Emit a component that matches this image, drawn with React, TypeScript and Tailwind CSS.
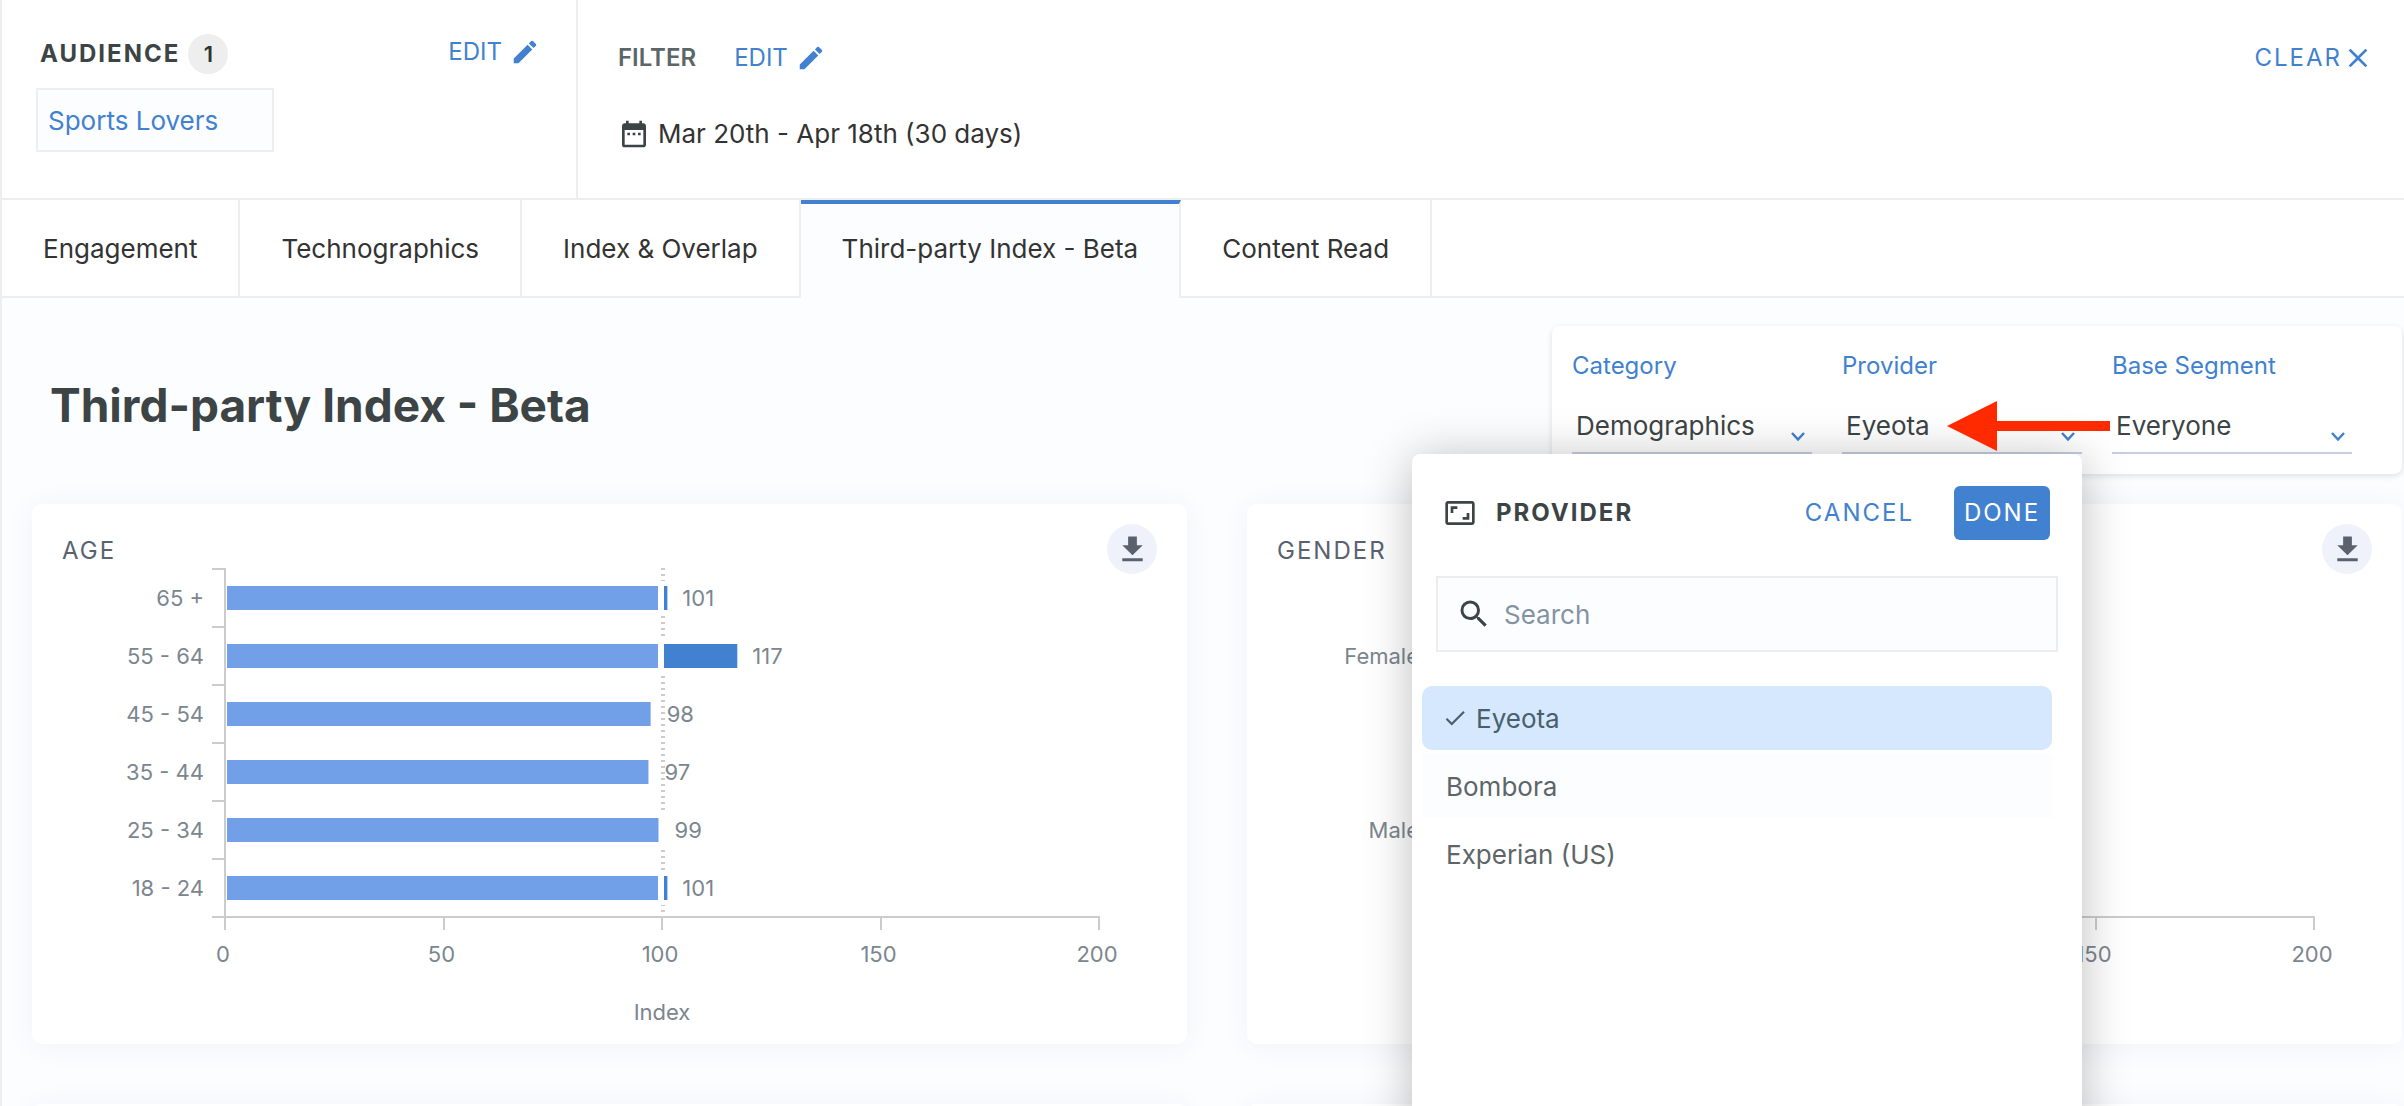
import { useState } from 'react';
import { MdAspectRatio, MdCheck, MdClose, MdDateRange, MdEdit, MdSearch } from 'react-icons/md';

interface ChartRow {
  label: string;
  value: number;
  index: number;
}

const tabs = ['Engagement', 'Technographics', 'Index & Overlap', 'Third-party Index - Beta', 'Content Read'];

const providers = ['Eyeota', 'Bombora', 'Experian (US)'];

const ageRows: ChartRow[] = [
  { label: '65 +', value: 101, index: 101 },
  { label: '55 - 64', value: 117, index: 117 },
  { label: '45 - 54', value: 98, index: 97.4 },
  { label: '35 - 44', value: 97, index: 96.9 },
  { label: '25 - 34', value: 99, index: 99.2 },
  { label: '18 - 24', value: 101, index: 101 },
];

const genderRows: ChartRow[] = [
  { label: 'Female', value: 98, index: 98 },
  { label: 'Male', value: 102, index: 102 },
];

const AXIS_X = 193;
const AXIS_TOP = 3;
const AXIS_BOTTOM = 351;
const BAR_HEIGHT = 24;

const scaleX = (v: number) => AXIS_X + v * 4.37;

function IndexChart({ name, rows }: { name: string; rows: ChartRow[] }) {
  const step = (AXIS_BOTTOM - AXIS_TOP) / rows.length;
  const baseline = scaleX(100);

  return (
    <svg width="1120" height="474" className="block max-w-none text-[22px]" role="img" aria-label={`${name} index`}>
      <g stroke="#cccccc" strokeWidth="2" shapeRendering="crispEdges">
        <line x1={baseline + 1} x2={baseline + 1} y1={2} y2={AXIS_BOTTOM} strokeWidth="4" strokeDasharray="2 4" />
        <line x1={AXIS_X} x2={AXIS_X} y1={2} y2={364} />
        <line x1={AXIS_X - 13} x2={scaleX(200) + 1} y1={AXIS_BOTTOM} y2={AXIS_BOTTOM} />
        {rows.map((row, i) => (
          <line key={row.label} x1={AXIS_X - 13} x2={AXIS_X} y1={AXIS_TOP + i * step} y2={AXIS_TOP + i * step} />
        ))}
        {[50, 100, 150, 200].map((v) => (
          <line key={v} x1={scaleX(v)} x2={scaleX(v)} y1={AXIS_BOTTOM} y2={364} />
        ))}
      </g>

      {rows.map((row, i) => {
        const center = AXIS_TOP + step * (i + 0.5);
        const top = center - BAR_HEIGHT / 2;
        const over = row.index > 100;
        const end = over ? baseline - 4 : scaleX(row.index);
        return (
          <g key={row.label}>
            {row.index > 99 && <rect x={baseline - 4} y={top - 5} width="9" height={BAR_HEIGHT + 10} fill="#ffffff" />}
            <rect x={AXIS_X + 2} y={top} width={end - AXIS_X - 2} height={BAR_HEIGHT} fill="#72a0e8" />
            {over && (
              <rect x={baseline + 2} y={top} width={scaleX(row.index) - baseline - 1} height={BAR_HEIGHT} fill="#4181d0" />
            )}
            <text x="172" y={center + 8} textAnchor="end" fill="#7b868f">{row.label}</text>
            <text x={scaleX(row.index) + 16} y={center + 8} fill="#7b868f">{row.value}</text>
          </g>
        );
      })}

      {[0, 50, 100, 150, 200].map((v) => (
        <text key={v} x={scaleX(v) - 2} y="396" textAnchor="middle" fill="#7b868f">{v}</text>
      ))}
      <text x={baseline} y="454" textAnchor="middle" fill="#7b868f">Index</text>
    </svg>
  );
}

const cardClass = 'h-[540px] min-w-0 overflow-hidden rounded-[10px] bg-white pt-5 shadow-[0_2px_28px_rgba(50,70,90,0.06)]';

function ChartCard({ title, rows }: { title: string; rows: ChartRow[] }) {
  return (
    <section className={cardClass}>
      <div className="flex h-[50px] items-center justify-between px-[30px]">
        <h2 className="pt-1 text-2xl tracking-[2px] text-[#5a6270]">{title}</h2>
        <button aria-label={`Download ${title}`} className="flex size-[50px] items-center justify-center rounded-full bg-[#eff2fb]">
          <svg width="35" height="35" viewBox="0 0 24 24" fill="#5a6270">
            <path d="M19 9h-4V3H9v6H5l7 7 7-7zM5 18v2h14v-2H5z" />
          </svg>
        </button>
      </div>
      <div className="-mt-2">
        <IndexChart name={title} rows={rows} />
      </div>
    </section>
  );
}

function SelectField({ id, label, options, value, onChange }: {
  id: string;
  label: string;
  options: string[];
  value: string;
  onChange?: (value: string) => void;
}) {
  return (
    <div className="w-60">
      <label htmlFor={id} className="block pt-5 text-2xl leading-10 text-[#4181d0]">{label}</label>
      <div className="relative">
        <select
          id={id}
          value={value}
          onChange={(e) => onChange?.(e.target.value)}
          className="block h-[68px] w-full appearance-none border-b-2 border-[#c5cee2] bg-transparent pb-2 pl-1 pt-5 text-[26px] text-[#3c4445] outline-none"
        >
          {options.map((o) => <option key={o}>{o}</option>)}
        </select>
        <svg className="pointer-events-none absolute bottom-3 right-[6px]" width="16" height="10" viewBox="0 0 16 10" fill="none" stroke="#4181d0" strokeWidth="2.5">
          <path d="M2 1l6 6.5L14 1" />
        </svg>
      </div>
    </div>
  );
}

function ProviderPicker({ value, onPick }: { value: string; onPick: (value: string) => void }) {
  return (
    <div className="absolute right-0 top-full z-10 h-[720px] w-[670px] rounded-lg bg-white pt-8 shadow-[0_4px_48px_rgba(0,0,0,0.26)]">
      <div className="flex h-[54px] items-center px-8">
        <MdAspectRatio className="size-8 text-[#3c4445]" />
        <h2 className="ml-5 text-2xl font-bold tracking-[2px] text-[#3c4445]">PROVIDER</h2>
        <button className="ml-auto text-2xl tracking-[2px] text-[#4181d0]">CANCEL</button>
        <button className="ml-10 h-[54px] w-24 rounded-md bg-[#4181d0] text-2xl tracking-[2px] text-white">DONE</button>
      </div>

      <label className="mx-6 mt-9 flex h-[76px] items-center border-2 border-[#ebedee] bg-[#fcfdff] pl-[18px]">
        <MdSearch className="size-9 text-[#3c4445]" />
        <input
          type="text"
          aria-label="Search providers"
          placeholder="Search"
          className="ml-3 min-w-0 flex-1 bg-transparent text-[26px] text-[#3c4445] outline-none placeholder:text-[#8592a3]"
        />
      </label>

      <ul className="ml-[10px] mr-[30px] mt-[34px] flex flex-col gap-1">
        {providers.map((p, i) => (
          <li key={p}>
            <button
              onClick={() => onPick(p)}
              className={`flex h-16 w-full items-center pl-6 text-left text-[26px] ${
                p === value ? 'rounded-[10px] bg-[#d6e8fe] text-[#47606b]' : 'text-[#5c6668]'
              } ${i === 1 && p !== value ? 'bg-[#fcfdff]' : ''}`}
            >
              {p === value && <MdCheck className="-ml-1 mr-2 size-[26px]" />}
              {p}
            </button>
          </li>
        ))}
      </ul>
    </div>
  );
}

export default function App() {
  const [activeTab, setActiveTab] = useState('Third-party Index - Beta');
  const [provider, setProvider] = useState('Eyeota');

  return (
    <div className="h-screen overflow-hidden border-l-2 border-[#eeeeee] bg-[#fcfdff] font-['Inter',sans-serif] text-[#333333]">
      <header className="flex h-[200px] border-b-2 border-[#eeeeee] bg-white">
        <section className="w-[576px] shrink-0 border-r-2 border-[#eeeeee] pl-[34px] pr-9 pt-[34px]">
          <div className="flex items-start justify-between">
            <div className="flex h-10 items-center gap-2 pl-1">
              <h2 className="text-2xl font-bold tracking-[2px] text-[#3c4445]">AUDIENCE</h2>
              <span className="flex size-10 items-center justify-center rounded-full bg-[#eeeeee] text-[22px] font-semibold">1</span>
            </div>
            <button className="flex h-9 items-center gap-2 text-2xl text-[#4181d0]">
              EDIT
              <MdEdit className="size-[30px]" />
            </button>
          </div>
          <a href="#" className="mt-[14px] flex h-16 w-[238px] items-center border-2 border-[#ededf2] bg-[#fcfdff] pl-[10px] text-[26px] text-[#4181d0]">
            Sports Lovers
          </a>
        </section>

        <section className="flex-1 pl-10 pr-[30px] pt-10">
          <div className="flex h-9 items-center text-2xl text-[#4181d0]">
            <h2 className="font-semibold text-[#5c6668]">FILTER</h2>
            <button className="ml-[38px] flex items-center gap-2">
              EDIT
              <MdEdit className="size-[30px]" />
            </button>
            <button className="ml-auto flex items-center tracking-[2px]">
              CLEAR
              <MdClose className="size-8" />
            </button>
          </div>
          <div className="mt-[38px] flex items-center gap-2 text-[26px]">
            <MdDateRange className="size-8 text-[#3c4445]" />
            Mar 20th - Apr 18th (30 days)
          </div>
        </section>
      </header>

      <nav className="flex h-[98px] bg-white text-[26px]">
        {tabs.map((tab) => (
          <button
            key={tab}
            onClick={() => setActiveTab(tab)}
            className={`border-r-2 px-[41px] ${
              tab === activeTab
                ? 'border-t-4 border-r-[#ededf2] border-t-[#4181d0] bg-[#fcfdff] pb-[6px]'
                : 'border-b-2 border-[#ededf2]'
            }`}
          >
            {tab}
          </button>
        ))}
        <div className="flex-1 border-b-2 border-[#ededf2]" />
      </nav>

      <main className="pl-[30px] pr-[2px] pt-7">
        <div className="flex items-center justify-between">
          <h1 className="pl-[18px] pt-[10px] text-[46px] font-bold text-[#3c4445]">Third-party Index - Beta</h1>
          <div className="flex h-[148px] gap-[30px] rounded-lg bg-white pl-5 pr-[50px] shadow-[0_2px_6px_rgba(0,0,0,0.12)]">
            <SelectField id="category" label="Category" options={['Demographics']} value="Demographics" />
            <div className="relative h-32">
              <SelectField id="provider" label="Provider" options={providers} value={provider} onChange={setProvider} />
              {/* Callout arrow */}
              <svg className="pointer-events-none absolute left-[105px] top-[75px] z-20" width="163" height="50" viewBox="0 0 163 50" fill="#ff2a00">
                <path d="M0 25L50 0v20h113v10H50v20z" />
              </svg>
              <ProviderPicker value={provider} onPick={setProvider} />
            </div>
            <SelectField id="segment" label="Base Segment" options={['Everyone']} value="Everyone" />
          </div>
        </div>

        <div className="mt-[30px] grid grid-cols-2 gap-[60px]">
          <ChartCard title="AGE" rows={ageRows} />
          <ChartCard title="GENDER" rows={genderRows} />
          <section className={cardClass} />
          <section className={cardClass} />
        </div>
      </main>
    </div>
  );
}
